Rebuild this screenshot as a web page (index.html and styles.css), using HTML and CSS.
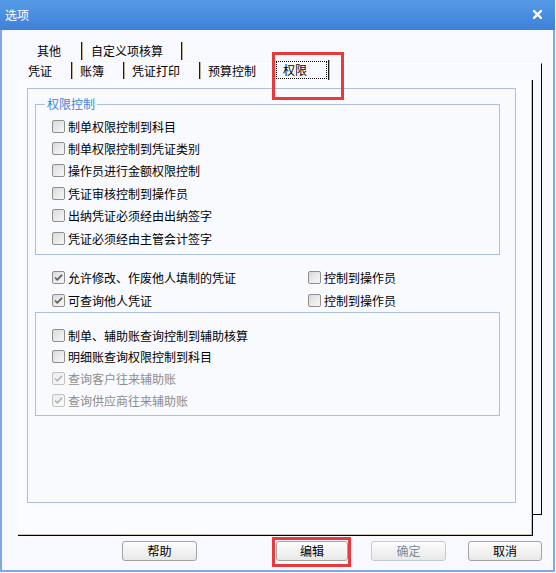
FILE: index.html
```html
<!DOCTYPE html>
<html lang="zh">
<head>
<meta charset="utf-8">
<title>选项</title>
<link rel="stylesheet" href="styles.css">
</head>
<body>
<div class="window">
  <div class="titlebar">
    <span class="title">选项</span>
    <svg class="close" width="9" height="9" viewBox="0 0 9 9"><path d="M1 1L8 8M8 1L1 8" stroke="#fff" stroke-width="2.4" stroke-linecap="square"/></svg>
  </div>
  <div class="body">
    <div class="tabs">
      <div class="tabrow row1">
        <span class="tab t-other">其他</span>
        <span class="tab t-custom">自定义项核算</span>
      </div>
      <div class="tabrow row2">
        <span class="tab t-first">凭证</span>
        <span class="tab">账簿</span>
        <span class="tab">凭证打印</span>
        <span class="tab t-nosep">预算控制</span>
        <span class="tab t-active"><span class="focus">权限</span></span>
      </div>
    </div>
    <div class="page">
      <div class="panel">
        <fieldset class="group">
          <legend>权限控制</legend>
          <div class="opt"><span class="cb"></span>制单权限控制到科目</div>
          <div class="opt"><span class="cb"></span>制单权限控制到凭证类别</div>
          <div class="opt"><span class="cb"></span>操作员进行金额权限控制</div>
          <div class="opt"><span class="cb"></span>凭证审核控制到操作员</div>
          <div class="opt"><span class="cb"></span>出纳凭证必须经由出纳签字</div>
          <div class="opt"><span class="cb"></span>凭证必须经由主管会计签字</div>
        </fieldset>
        <div class="mid">
          <div class="opt2"><span class="cb"><svg viewBox="0 0 11 11" class="ck"><path d="M2 5.5L4.3 7.8L9 2.8" fill="none" stroke="#5c5c5c" stroke-width="1.7"/></svg></span>允许修改、作废他人填制的凭证</div>
          <div class="opt2"><span class="cb"></span>控制到操作员</div>
          <div class="opt2"><span class="cb"><svg viewBox="0 0 11 11" class="ck"><path d="M2 5.5L4.3 7.8L9 2.8" fill="none" stroke="#5c5c5c" stroke-width="1.7"/></svg></span>可查询他人凭证</div>
          <div class="opt2"><span class="cb"></span>控制到操作员</div>
        </div>
        <div class="box">
          <div class="opt3"><span class="cb"></span>制单、辅助账查询控制到辅助核算</div>
          <div class="opt3"><span class="cb"></span>明细账查询权限控制到科目</div>
          <div class="opt3 disabled"><span class="cb"><svg viewBox="0 0 11 11" class="ck"><path d="M2 5.5L4.3 7.8L9 2.8" fill="none" stroke="#b4b4b4" stroke-width="1.7"/></svg></span>查询客户往来辅助账</div>
          <div class="opt3 disabled"><span class="cb"><svg viewBox="0 0 11 11" class="ck"><path d="M2 5.5L4.3 7.8L9 2.8" fill="none" stroke="#b4b4b4" stroke-width="1.7"/></svg></span>查询供应商往来辅助账</div>
        </div>
      </div>
    </div>
    <div class="buttons">
      <span class="btn">帮助</span>
      <span class="hl"><span class="btn btn-edit">编辑</span></span>
      <span class="btn btn-ok">确定</span>
      <span class="btn btn-cancel">取消</span>
    </div>
    <div class="mark-tab"></div>
  </div>
</div>
</body>
</html>
```
FILE: styles.css
```css
* { box-sizing: border-box; }
html, body { margin: 0; padding: 0; background: #fff; }
body {
  font-family: "Noto Sans CJK SC", "Liberation Sans", sans-serif;
  font-size: 12px;
  color: #000;
}
.window {
  width: 555px;
  height: 572px;
  border-style: solid;
  border-color: #7ea9e4;
  border-width: 0 2px 2px 2px;
  background: #f7f9fe;
  display: flex;
  flex-direction: column;
}
.titlebar {
  height: 30px;
  margin: 0 -2px;
  background: linear-gradient(#559ae6, #3e81d9);
  display: flex;
  align-items: center;
  justify-content: space-between;
  padding: 0 13px 1px 5px;
  color: #fff;
}
.title { font-size: 12px; line-height: 14px; }
.close { display: block; }
.body {
  flex: 1;
  position: relative;
  z-index: 0;
  background: #f7f9fe;
}
.tabs { padding-top: 12px; }
.tabrow { display: flex; height: 19px; }
.row1 { padding-left: 25px; }
.row2 { padding-left: 16px; }
.tab {
  height: 18px;
  line-height: 17px;
  border-right: 1px solid #1a1a1a;
  box-shadow: 1px 0 0 #b9b095;
  padding: 0 19px 0 8px;
}
.row2 .tab { margin-top: 1px; height: 17px; }
.t-other { padding: 0 20px 0 10px; }
.t-custom { padding: 0 18px 0 9px; }
.t-first { padding-left: 10px; }
.t-nosep { border-right: none; box-shadow: none; padding-right: 20px; }
.row2 .t-active {
  margin-top: -1px;
  height: 20px;
  padding: 0 1px 0 0;
  display: flex;
  align-items: center;
}
.focus {
  border: 1px dotted #000;
  height: 18px;
  line-height: 16px;
  padding: 0 19px 0 6px;
}
.page {
  margin-left: 16px;
  width: 515px;
  height: 456px;
  position: relative;
  background: #fbfcff;
  border-right: 1px solid #000;
  border-bottom: 1px solid #000;
  box-shadow: inset -1px -1px 0 #c9c4b2;
  padding: 8px 0 0 9px;
}
.page::before {
  content: "";
  position: absolute;
  top: -17px;
  right: -10px;
  bottom: 20px;
  left: 60px;
  border-right: 1px solid #000;
  border-bottom: 1px solid #000;
  border-top: 1px solid #fff;
  z-index: -1;
}
.panel {
  width: 489px;
  height: 415px;
  border: 1px solid #a9bfdc;
  background: #f9fafe;
}
.group {
  margin: 8px 0 0 7px;
  width: 465px;
  padding: 4px 0 5px 9px;
  border: 1px solid #a9bfdc;
  min-width: 0;
}
.group legend {
  padding: 0 2px;
  line-height: 14px;
  color: #3f83dc;
}
.opt {
  display: flex;
  align-items: center;
  height: 22.4px;
  margin-left: 7px;
}
.cb {
  width: 13px;
  height: 13px;
  flex: none;
  border: 1px solid #8e8e8e;
  border-radius: 2px;
  background: linear-gradient(135deg, #dadada, #f8f8f8);
  margin-right: 3px;
  display: flex;
  align-items: center;
  justify-content: center;
}
.ck { width: 11px; height: 11px; display: block; }
.mid {
  margin: 11px 0 0 24px;
  display: grid;
  grid-template-columns: 256px auto;
}
.opt2 {
  display: flex;
  align-items: center;
  height: 23px;
}
.box {
  margin-left: 7px;
  width: 465px;
  height: 104px;
  border: 1px solid #a9bfdc;
  padding: 11px 0 0 16px;
}
.opt3 {
  display: flex;
  align-items: center;
  height: 21.7px;
}
.disabled { color: #8d8d8d; }
.disabled .cb { border-color: #c3c3c3; background: linear-gradient(135deg, #ececec, #fafafa); }
.buttons {
  display: flex;
  align-items: flex-start;
  padding: 5px 0 0 120px;
}
.btn {
  width: 75px;
  height: 20px;
  border: 1px solid #a4a4a4;
  border-radius: 3px;
  background: linear-gradient(#fdfdfd, #e8e8e8);
  display: flex;
  align-items: center;
  justify-content: center;
  line-height: 14px;
}
.hl {
  margin: -4px 0 0 75px;
  width: 79px;
  border: 3px solid #e8393b;
  padding: 1px 0 3px 1px;
}
.btn-edit { width: 72px; }
.btn-ok { margin-left: 20px; color: #7c8a98; border-color: #c6cbd2; }
.btn-cancel { margin-left: 22px; width: 74px; }
.mark-tab {
  position: absolute;
  left: 270px;
  top: 22px;
  width: 72px;
  height: 48px;
  border: 3px solid #e8393b;
  z-index: 2;
}
```
